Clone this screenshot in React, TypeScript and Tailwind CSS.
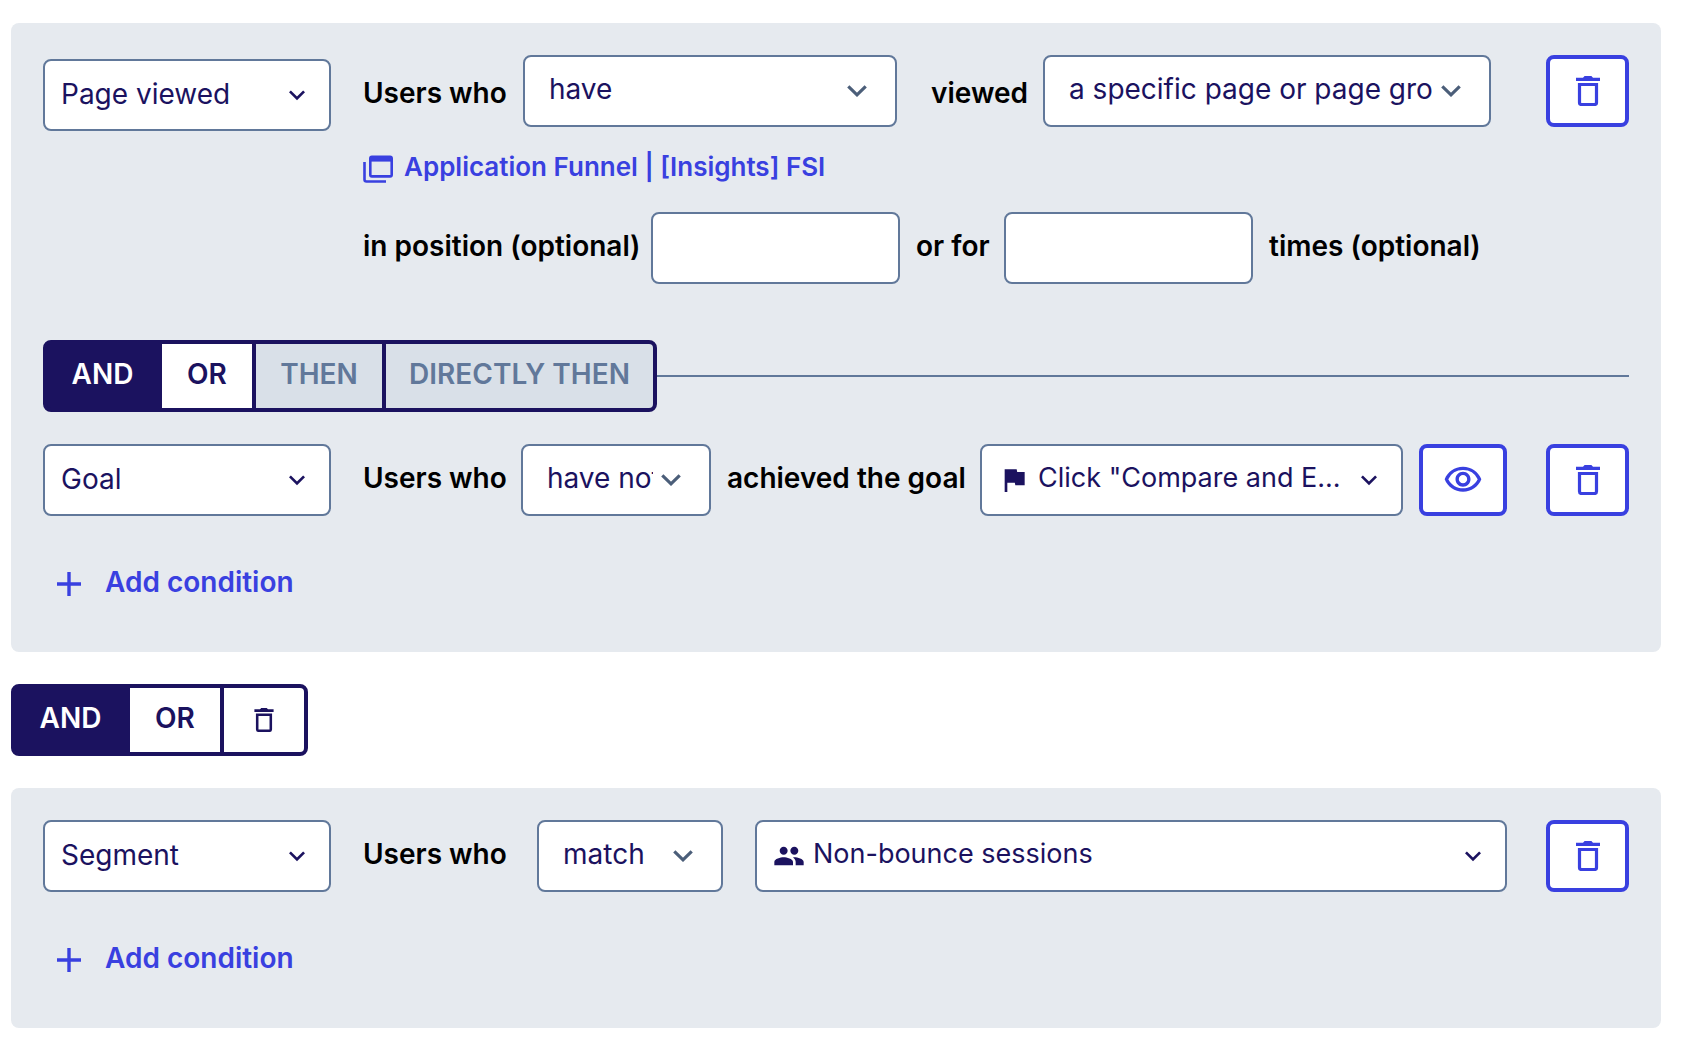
import clsx from 'clsx'
import { ReactNode } from 'react'
import { MdExpandMore, MdFlag, MdOutlineVisibility, MdPeople } from 'react-icons/md'

const TrashIcon = ({ className }: { className: string }) => (
  <svg className={className} viewBox="0 0 24 30" fill="none" aria-hidden="true">
    <path d="M0 1.7h7L8.6 0h6.8L17 1.7h7V5H0z" fill="currentColor" />
    <path
      d="M3.5 8.5h17v18a2 2 0 0 1-2 2h-13a2 2 0 0 1-2-2z"
      stroke="currentColor"
      strokeWidth="3.2"
    />
  </svg>
)

const PagesIcon = () => (
  <svg className="h-7 w-[30px] shrink-0" viewBox="0 0 30 28" fill="none" aria-hidden="true">
    <path d="M1.5 7v17.5a2 2 0 0 0 2 2H23" stroke="currentColor" strokeWidth="2.6" />
    <rect x="7.3" y="1.8" width="21.4" height="19.6" rx="1.6" stroke="currentColor" strokeWidth="2.6" />
    <path d="M7 2h22v4.6H7z" fill="currentColor" />
  </svg>
)

const PlusIcon = () => (
  <svg className="size-6" viewBox="0 0 24 24" aria-hidden="true">
    <path d="M12 0v24M0 12h24" stroke="currentColor" strokeWidth="3.4" />
  </svg>
)

type SelectProps = {
  label: string
  options: string[]
  className: string
  icon?: ReactNode
}

// Chevron and icon share the grid cell of the select, so that they lie over it
const PickerSelect = ({ label, options, className, icon }: SelectProps) => (
  <div className={clsx('grid items-center', className)}>
    <select
      aria-label={label}
      className={clsx(
        'col-start-1 row-start-1 h-18 w-full appearance-none rounded-lg border-2 border-[#61789a] bg-white pr-12 text-[#1b125f]',
        icon ? 'pb-1 pl-14 text-[27px]' : 'pb-0.5 pl-4',
      )}
    >
      {options.map((option) => (
        <option key={option}>{option}</option>
      ))}
    </select>
    {icon && (
      <span className="pointer-events-none col-start-1 row-start-1 ml-[18px] justify-self-start text-[#1b125f]">
        {icon}
      </span>
    )}
    <MdExpandMore className="pointer-events-none col-start-1 row-start-1 mr-[18px] size-8 justify-self-end text-[#1b125f]" />
  </div>
)

const InlineSelect = ({ label, options, className }: SelectProps) => (
  <div className={clsx('grid items-center', className)}>
    <select
      aria-label={label}
      className="col-start-1 row-start-1 h-18 w-full appearance-none rounded-lg border-2 border-[#61789a] bg-white pr-14 pb-1 pl-6 text-[#1b125f]"
    >
      {options.map((option) => (
        <option key={option}>{option}</option>
      ))}
    </select>
    <svg
      className="pointer-events-none col-start-1 row-start-1 mr-[30px] h-3 w-5 justify-self-end text-[#4b5e79]"
      viewBox="0 0 20 12"
      fill="none"
      aria-hidden="true"
    >
      <path d="m1.3 1.3 8.7 8.5 8.7-8.5" stroke="currentColor" strokeWidth="3.2" />
    </svg>
  </div>
)

const IconButton = ({ label, wide, children }: { label: string; wide?: boolean; children: ReactNode }) => (
  <button
    type="button"
    aria-label={label}
    className={clsx(
      'flex h-18 shrink-0 items-center justify-center rounded-lg border-4 border-[#3940e0] bg-white text-[#3940e0]',
      wide ? 'w-[88px]' : 'w-[83px]',
    )}
  >
    {children}
  </button>
)

const DeleteButton = () => (
  <IconButton label="Delete condition">
    <TrashIcon className="h-[30px] w-6" />
  </IconButton>
)

const OperatorButton = ({
  active,
  disabled,
  label,
  className,
  children,
}: {
  active?: boolean
  disabled?: boolean
  label?: string
  className: string
  children: ReactNode
}) => (
  <button
    type="button"
    aria-label={label}
    disabled={disabled}
    className={clsx(
      'flex h-16 items-center justify-center pb-1 font-semibold',
      active && 'bg-[#1b125f] text-white',
      disabled && 'bg-[#d9e0e8] text-[#61789a]',
      !active && !disabled && 'bg-white text-[#1b125f]',
      className,
    )}
  >
    {children}
  </button>
)

const OperatorGroup = ({ children }: { children: ReactNode }) => (
  <div
    role="group"
    aria-label="Operator"
    className="flex shrink-0 divide-x-4 divide-[#1b125f] overflow-hidden rounded-lg border-4 border-[#1b125f] bg-[#1b125f]"
  >
    {children}
  </div>
)

const Text = ({ className, children }: { className?: string; children: ReactNode }) => (
  <span className={clsx('shrink-0 font-semibold whitespace-nowrap text-black', className)}>{children}</span>
)

const AddCondition = () => (
  <button type="button" className="flex items-center gap-6 pl-[14px] font-semibold text-[#3940e0]">
    <PlusIcon />
    <span className="pb-1">Add condition</span>
  </button>
)

export default function App() {
  const kinds = ['Page viewed', 'Goal', 'Segment']
  const startWith = (kind: string) => [kind, ...kinds.filter((k) => k !== kind)]

  return (
    <main className="flex flex-col gap-8 bg-white pt-[23px] pr-[23px] pb-6 pl-[11px] font-['Inter',sans-serif] text-[28px] leading-9">
      <section className="rounded-lg bg-[#e6eaef] px-8 pt-8 pb-12">
        <div className="flex items-start">
          <PickerSelect label="Condition type" options={startWith('Page viewed')} className="mt-1 w-72 shrink-0" />
          <div className="ml-8 flex min-w-0 flex-1 flex-col">
            <div className="flex items-center">
              <Text className="w-40 pt-1">Users who</Text>
              <InlineSelect label="Have or have not" options={['have', 'have not']} className="w-[374px]" />
              <Text className="ml-[34px] w-28 pt-1">viewed</Text>
              <InlineSelect
                label="Page scope"
                options={['a specific page or page group', 'any page']}
                className="min-w-0 flex-1"
              />
            </div>
            <a href="#page" className="mt-[22px] flex items-center gap-[11px] text-[26px] font-semibold text-[#3940e0]">
              <PagesIcon />
              <span className="pb-1">Application Funnel | [Insights] FSI</span>
            </a>
            <div className="mt-[23px] flex items-center gap-4">
              <label htmlFor="position" className="w-[272px] shrink-0 pb-1 font-semibold whitespace-nowrap text-black">
                in position (optional)
              </label>
              <input id="position" className="h-18 w-[249px] rounded-lg border-2 border-[#61789a] bg-white px-4" />
              <label htmlFor="times" className="w-18 shrink-0 pb-1 font-semibold whitespace-nowrap text-black">
                or for
              </label>
              <input
                id="times"
                aria-describedby="times-unit"
                className="h-18 w-[249px] rounded-lg border-2 border-[#61789a] bg-white px-4"
              />
              <span id="times-unit" className="shrink-0 pb-1 font-semibold whitespace-nowrap text-black">
                times (optional)
              </span>
            </div>
          </div>
          <div className="ml-[55px]">
            <DeleteButton />
          </div>
        </div>

        <div className="mt-14 flex items-center">
          <OperatorGroup>
            <OperatorButton active className="w-[115px]">AND</OperatorButton>
            <OperatorButton className="w-[94px]">OR</OperatorButton>
            <OperatorButton disabled className="w-[130px]">THEN</OperatorButton>
            <OperatorButton disabled className="w-[267px]">DIRECTLY THEN</OperatorButton>
          </OperatorGroup>
          <div className="h-[2px] flex-1 bg-[#61789a]" />
        </div>

        <div className="mt-8 flex items-center">
          <PickerSelect label="Condition type" options={startWith('Goal')} className="w-72 shrink-0" />
          <Text className="ml-8 w-[158px] pb-1">Users who</Text>
          <InlineSelect label="Have or have not" options={['have not', 'have']} className="w-[190px]" />
          <Text className="mx-4 w-[237px] pb-1">achieved the goal</Text>
          <PickerSelect
            label="Goal"
            options={['Click "Compare and E...']}
            className="mr-4 min-w-0 flex-1"
            icon={<MdFlag className="size-8" />}
          />
          <IconButton label="Preview goal" wide>
            <MdOutlineVisibility className="size-10" />
          </IconButton>
          <div className="ml-[39px]">
            <DeleteButton />
          </div>
        </div>

        <div className="mt-12">
          <AddCondition />
        </div>
      </section>

      <div className="flex">
        <OperatorGroup>
          <OperatorButton active className="w-[115px]">AND</OperatorButton>
          <OperatorButton className="w-[94px]">OR</OperatorButton>
          <OperatorButton label="Delete group" className="w-20">
            <TrashIcon className="mt-1 h-6 w-5" />
          </OperatorButton>
        </OperatorGroup>
      </div>

      <section className="rounded-lg bg-[#e6eaef] px-8 pt-8 pb-12">
        <div className="flex items-center">
          <PickerSelect label="Condition type" options={startWith('Segment')} className="w-72 shrink-0" />
          <Text className="ml-8 w-[174px] pb-1">Users who</Text>
          <InlineSelect label="Match or not" options={['match', 'do not match']} className="w-[186px]" />
          <PickerSelect
            label="Segment"
            options={['Non-bounce sessions']}
            className="ml-8 min-w-0 flex-1"
            icon={<MdPeople className="size-8" />}
          />
          <div className="ml-[39px]">
            <DeleteButton />
          </div>
        </div>
        <div className="mt-12">
          <AddCondition />
        </div>
      </section>
    </main>
  )
}
